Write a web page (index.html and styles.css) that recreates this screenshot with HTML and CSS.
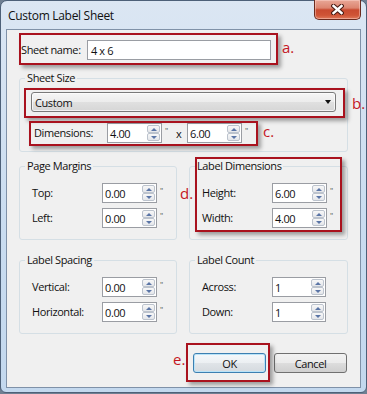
FILE: index.html
```html
<!DOCTYPE html>
<html lang="en">
<head>
    <meta charset="UTF-8">
    <title>Custom Label Sheet</title>
    <link rel="stylesheet" href="styles.css">
</head>
<body>

<div class="window">
    <div class="titlebar">
        <span class="title">Custom Label Sheet</span>
        <div class="close-btn">
            <svg width="13" height="11" viewBox="0 0 13 11">
                <path d="M2.5 2 L10.5 9 M10.5 2 L2.5 9" stroke="#4a1c14" stroke-width="4.6" stroke-linecap="square" fill="none"/>
                <path d="M2.5 2 L10.5 9 M10.5 2 L2.5 9" stroke="#ffffff" stroke-width="2.4" stroke-linecap="square" fill="none"/>
            </svg>
        </div>
    </div>

    <div class="client">
        <div class="name-row">
            <span class="label name-label">Sheet name:</span>
            <div class="textbox name-box">4 x 6</div>
        </div>

        <fieldset class="group sheet-size">
            <legend>Sheet Size</legend>
            <div class="combo">
                <span>Custom</span>
                <span class="combo-arrow"></span>
            </div>
            <div class="dims-row">
                <span class="label dims-label">Dimensions:</span>
                <div class="spin dims-spin">
                    <span class="spin-value">4.00</span>
                    <span class="spin-buttons"><span class="up"></span><span class="down"></span></span>
                </div>
                <span class="unit unit-first">"</span>
                <span class="times">x</span>
                <div class="spin dims-spin">
                    <span class="spin-value">6.00</span>
                    <span class="spin-buttons"><span class="up"></span><span class="down"></span></span>
                </div>
                <span class="unit">"</span>
            </div>
        </fieldset>

        <div class="group-grid">
            <fieldset class="group">
                <legend>Page Margins</legend>
                <div class="row">
                    <span class="label">Top:</span>
                    <div class="spin"><span class="spin-value">0.00</span><span class="spin-buttons"><span class="up"></span><span class="down"></span></span></div>
                    <span class="unit">"</span>
                </div>
                <div class="row">
                    <span class="label">Left:</span>
                    <div class="spin"><span class="spin-value">0.00</span><span class="spin-buttons"><span class="up"></span><span class="down"></span></span></div>
                    <span class="unit">"</span>
                </div>
            </fieldset>

            <fieldset class="group">
                <legend>Label Dimensions</legend>
                <div class="row">
                    <span class="label">Height:</span>
                    <div class="spin"><span class="spin-value">6.00</span><span class="spin-buttons"><span class="up"></span><span class="down"></span></span></div>
                    <span class="unit">"</span>
                </div>
                <div class="row">
                    <span class="label">Width:</span>
                    <div class="spin"><span class="spin-value">4.00</span><span class="spin-buttons"><span class="up"></span><span class="down"></span></span></div>
                    <span class="unit">"</span>
                </div>
            </fieldset>

            <fieldset class="group">
                <legend>Label Spacing</legend>
                <div class="row">
                    <span class="label">Vertical:</span>
                    <div class="spin"><span class="spin-value">0.00</span><span class="spin-buttons"><span class="up"></span><span class="down"></span></span></div>
                    <span class="unit">"</span>
                </div>
                <div class="row">
                    <span class="label">Horizontal:</span>
                    <div class="spin"><span class="spin-value">0.00</span><span class="spin-buttons"><span class="up"></span><span class="down"></span></span></div>
                    <span class="unit">"</span>
                </div>
            </fieldset>

            <fieldset class="group">
                <legend>Label Count</legend>
                <div class="row">
                    <span class="label">Across:</span>
                    <div class="spin count-spin"><span class="spin-value">1</span><span class="spin-buttons"><span class="up"></span><span class="down"></span></span></div>
                </div>
                <div class="row">
                    <span class="label">Down:</span>
                    <div class="spin count-spin"><span class="spin-value">1</span><span class="spin-buttons"><span class="up"></span><span class="down"></span></span></div>
                </div>
            </fieldset>
        </div>

        <div class="buttons">
            <div class="btn btn-default">OK</div>
            <div class="btn">Cancel</div>
        </div>

        <!-- red callouts drawn over the dialog -->
        <div class="callout callout-a"></div>
        <span class="callout-tag tag-a">a.</span>
        <div class="callout callout-b"></div>
        <span class="callout-tag tag-b">b.</span>
        <div class="callout callout-c"></div>
        <span class="callout-tag tag-c">c.</span>
        <div class="callout callout-d"></div>
        <span class="callout-tag tag-d">d.</span>
        <div class="callout callout-e"></div>
        <span class="callout-tag tag-e">e.</span>
    </div>
</div>

</body>
</html>
```

FILE: styles.css
```css
:root {
    --frame-border: #4d6078;
    --client-border: #7f91a8;
    --face: #f0f0f0;
    --text-color: #111;
    --group-border: #d5dfe5;
    --callout: #a9121e;
    --callout-text: #c4161f;
}

* {
    box-sizing: border-box;
}

body {
    margin: 0;
    background-color: #6f7f92;
    font-family: 'Open Sans', 'Noto Sans', sans-serif;
    font-size: 11px;
    letter-spacing: -0.4px;
    color: var(--text-color);
}

.window {
    width: 367px;
    border: 1px solid var(--frame-border);
    border-radius: 7px 7px 6px 6px;
    background: linear-gradient(#dbe6f3, #c9dcf0 60%, #c3d8ee);
    padding-bottom: 4px;
}

.titlebar {
    height: 28px;
    display: flex;
    justify-content: space-between;
    align-items: flex-start;
    padding: 0 5px 0 7px;
}

.title {
    margin-top: 7px;
    font-size: 12px;
    line-height: 16px;
    letter-spacing: -0.3px;
    color: #111;
}

.close-btn {
    margin-top: -1px;
    width: 47px;
    height: 20px;
    border: 1px solid #6b2a1e;
    border-top: none;
    border-radius: 0 0 5px 5px;
    background: linear-gradient(#e8a797 0%, #dc8570 42%, #c94a30 52%, #cf5436 80%, #e0795b 100%);
    box-shadow: inset 0 0 0 1px rgba(255, 220, 210, 0.45);
    display: flex;
    align-items: center;
    justify-content: center;
}

.client {
    position: relative;
    margin: 0 5px;
    border: 1px solid var(--client-border);
    background-color: var(--face);
    padding: 10px 12px 14px;
}

.label {
    line-height: 16px;
}

.textbox,
.spin {
    height: 20px;
    border: 1px solid #9a9da3;
    background-color: #fff;
    display: flex;
    align-items: center;
    padding-left: 2px;
}

.name-row {
    display: flex;
    align-items: center;
    padding-left: 2px;
}

.name-label {
    width: 66px;
}

.name-box {
    width: 184px;
    padding-left: 3px;
}

/* group boxes */
.group {
    margin: 0;
    padding: 9px 0 11px 0;
    min-width: 0;
    border: 1px solid var(--group-border);
    border-radius: 3px;
}

.group legend {
    margin-left: 5px;
    padding: 0 2px;
    line-height: 16px;
}

.sheet-size {
    margin-top: 10px;
    padding: 6px 0 8px;
}

.combo {
    height: 20px;
    margin: 0 11px;
    border: 1px solid #7a7a7a;
    border-radius: 3px;
    background: linear-gradient(#f6f6f6 0%, #ececec 50%, #e0e0e0 51%, #d6d6d6 100%);
    box-shadow: inset 0 0 0 1px rgba(255, 255, 255, 0.7);
    display: flex;
    align-items: center;
    justify-content: space-between;
    padding: 0 4px 0 3px;
}

.combo-arrow {
    width: 0;
    height: 0;
    border-left: 3.5px solid transparent;
    border-right: 3.5px solid transparent;
    border-top: 4px solid #111;
}

.dims-row {
    display: flex;
    align-items: center;
    margin-top: 11px;
    padding-left: 14px;
}

.dims-label {
    width: 73px;
}

.dims-spin {
    width: 57px;
}

.unit {
    align-self: flex-start;
    font-size: 8px;
    line-height: 8px;
    margin-top: 3px;
    padding-left: 3px;
    color: #555;
}

.unit-first {
    width: 14px;
}

.times {
    width: 11px;
}

/* numeric up-down */
.spin {
    width: 55px;
}

.spin-value {
    flex: 1;
}

.spin-buttons {
    width: 13px;
    height: 16px;
    margin-right: 1px;
    display: flex;
    flex-direction: column;
}

.spin-buttons span {
    flex: 1;
    border: 1px solid #bcc3cd;
    border-radius: 2px;
    background: linear-gradient(#f8f8f8, #e4e6ea);
    display: flex;
    align-items: center;
    justify-content: center;
}

.spin-buttons .up::after,
.spin-buttons .down::after {
    content: '';
    width: 0;
    height: 0;
    border-left: 3px solid transparent;
    border-right: 3px solid transparent;
}

.spin-buttons .up::after {
    border-bottom: 3px solid #5a75a6;
}

.spin-buttons .down::after {
    border-top: 3px solid #5a75a6;
}

.count-spin {
    width: 54px;
}

.group-grid {
    display: grid;
    grid-template-columns: 158px 159px;
    column-gap: 12px;
    row-gap: 12px;
    margin-top: 6px;
}

.row {
    display: flex;
    align-items: center;
    margin-left: 12px;
}

.row + .row {
    margin-top: 5px;
}

.row .label {
    width: 70px;
}

/* dialog buttons */
.buttons {
    display: flex;
    justify-content: flex-end;
    gap: 8px;
    margin-top: 19px;
    padding-right: 1px;
}

.btn {
    width: 73px;
    height: 20px;
    border: 1px solid #707070;
    border-radius: 3px;
    background: linear-gradient(#f2f2f2 0%, #ebebeb 50%, #dddddd 51%, #cfcfcf 100%);
    display: flex;
    align-items: center;
    justify-content: center;
    font-size: 11px;
}

.btn-default {
    border-color: #3c7fb1;
    background: linear-gradient(#f4f8fb 0%, #eceff2 50%, #e0e4e8 51%, #d5dadf 100%);
    box-shadow: inset 0 0 0 1px #b9e3f8;
}

/* annotation overlay */
.callout {
    position: absolute;
    border: 2px solid var(--callout);
    box-shadow: 3px 3px 4px rgba(0, 0, 0, 0.35);
}

.callout-tag {
    position: absolute;
    font-size: 15px;
    line-height: 18px;
    letter-spacing: 0;
    color: var(--callout-text);
}

.callout-a { left: 12px; top: 3px; width: 259px; height: 32px; }
.tag-a { left: 275px; top: 8px; }

.callout-b { left: 17px; top: 58px; width: 321px; height: 30px; }
.tag-b { left: 345px; top: 64px; }

.callout-c { left: 22px; top: 91px; width: 229px; height: 25px; }
.tag-c { left: 256px; top: 92px; }

.callout-d { left: 188px; top: 127px; width: 147px; height: 75px; }
.tag-d { left: 173px; top: 154px; }

.callout-e { left: 179px; top: 313px; width: 84px; height: 39px; }
.tag-e { left: 166px; top: 320px; }
```
